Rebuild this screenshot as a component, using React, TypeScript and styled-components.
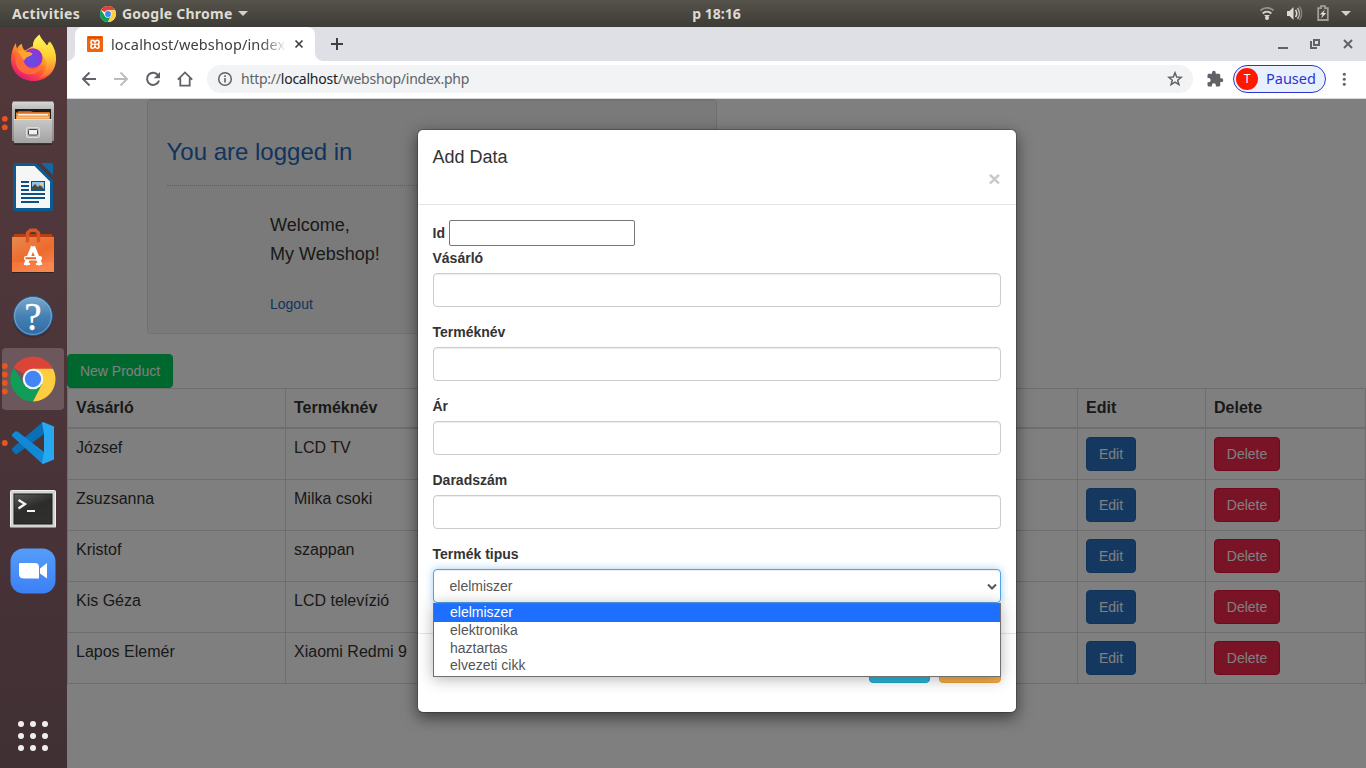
import React from "react";
import styled, { createGlobalStyle, css } from "styled-components";

const GlobalStyle = createGlobalStyle`
  * { box-sizing: border-box; }
  html, body { margin: 0; padding: 0; }
  body {
    width: 1366px;
    height: 768px;
    overflow: hidden;
    font-family: "Liberation Sans", Arial, sans-serif;
    font-size: 14px;
    line-height: 1.42857;
    color: #333;
  }
`;

const uiFont = css`
  font-family: "Noto Sans", "Open Sans", sans-serif;
`;

/* ---------- Desktop shell ---------- */

const Desktop = styled.div`
  width: 1366px;
  height: 768px;
  display: flex;
  flex-direction: column;
  overflow: hidden;
`;

const TopBar = styled.header`
  ${uiFont}
  height: 27px;
  flex: none;
  display: grid;
  grid-template-columns: 1fr auto 1fr;
  align-items: center;
  padding: 0 15px 0 12px;
  background: linear-gradient(#55534a, #3d3b36);
  color: #dfdbd2;
  font-size: 14px;
  font-weight: 700;
  line-height: 27px;
`;

const TopLeft = styled.div`
  display: flex;
  align-items: center;
  svg { margin-left: 20px; flex: none; }
`;

const TopText = styled.span<{ $space?: number; $w?: number }>`
  letter-spacing: ${(p) => p.$space ?? 0}px;
  white-space: nowrap;
  width: ${(p) => (p.$w ? `${p.$w}px` : "auto")};
`;

const AppName = styled(TopText)`
  margin-left: 6px;
`;

const Clock = styled(TopText)`
  padding-left: 70px;
`;

const Caret = styled.i<{ $gap?: number }>`
  margin-left: ${(p) => p.$gap ?? 0}px;
  border: 5px solid transparent;
  border-top-color: #d5d1c8;
  border-bottom: 0;
`;

const StatusArea = styled.div`
  display: flex;
  justify-content: flex-end;
  align-items: center;
`;

const Main = styled.div`
  flex: 1;
  display: flex;
  min-height: 0;
`;

const Dock = styled.nav`
  width: 67px;
  flex: none;
  display: flex;
  flex-direction: column;
  background: linear-gradient(#53383b 0%, #4d363a 40%, #463237 72%, #403033 100%);
`;

const DockItem = styled.div<{ $active?: boolean }>`
  height: 62px;
  margin: 1px 3px 1px 2px;
  border-radius: 4px;
  background: ${(p) => (p.$active ? "#6b575c" : "transparent")};
  svg {
    display: block;
    transform: translate(-2px, -1px);
    overflow: visible;
  }
`;

const AppsButton = styled.div`
  margin-top: auto;
  height: 64px;
  svg { display: block; }
`;

/* ---------- Browser window ---------- */

const Browser = styled.div`
  ${uiFont}
  flex: 1;
  min-width: 0;
  display: flex;
  flex-direction: column;
`;

const TabStrip = styled.div`
  height: 34px;
  flex: none;
  display: flex;
  align-items: flex-end;
  background: #dee0e6;
`;

const TabFlare = styled.span<{ $side: "left" | "right" }>`
  width: 8px;
  height: 8px;
  background: radial-gradient(
    circle at ${(p) => (p.$side === "left" ? "0 0" : "100% 0")},
    transparent 7.5px,
    #fff 8.2px
  );
`;

const Tab = styled.div`
  width: 240px;
  height: 34px;
  display: flex;
  align-items: center;
  padding: 0 11px 0 12px;
  border-radius: 8px 8px 0 0;
  background: #fff;
`;

const TabTitle = styled.span`
  flex: none;
  width: 175px;
  margin: 0 8px;
  overflow: hidden;
  white-space: nowrap;
  font-size: 14.5px;
  letter-spacing: 0.13px;
  line-height: 32px;
  color: #3c4043;
  mask-image: linear-gradient(to right, #000 150px, transparent 176px);
`;

const NewTab = styled.div`
  display: flex;
  align-items: center;
  height: 34px;
  margin-left: 7px;
`;

const WindowControls = styled.div`
  display: flex;
  height: 34px;
  margin-left: auto;
  margin-right: 12px;
  align-items: center;
`;

const Toolbar = styled.div`
  height: 38px;
  flex: none;
  display: flex;
  align-items: center;
  padding: 0 13px 2px 14px;
  background: #fff;
  border-bottom: 1px solid #d5d7dc;
`;

const NavIcons = styled.div`
  display: flex;
  gap: 16px;
  margin-right: 14px;
  svg { display: block; }
`;

const Omnibox = styled.div`
  width: 986px;
  height: 28px;
  display: flex;
  align-items: center;
  padding: 0 10px;
  border-radius: 14px;
  background: #f1f3f4;
`;

const Url = styled.span`
  flex: 1;
  margin-left: 8px;
  font-size: 14px;
  letter-spacing: -0.25px;
  line-height: 28px;
  color: #5f6368;
  b { font-weight: 400; color: #202124; }
`;

const Extensions = styled.div`
  display: flex;
  margin-left: 13px;
`;

const Profile = styled.div`
  display: flex;
  align-items: center;
  width: 93px;
  height: 28px;
  margin: 0 10px 0 9px;
  padding-left: 2px;
  border: 1px solid #2b36cc;
  border-radius: 14px;
  background: #e8f0fe;
  color: #2b36cc;
  font-size: 14.5px;
`;

const Avatar = styled.span`
  width: 22px;
  height: 22px;
  margin-right: 8px;
  border-radius: 50%;
  background: #ff1800;
  color: #fff;
  font-size: 12px;
  line-height: 22px;
  text-align: center;
`;

/* ---------- Web page ---------- */

const Viewport = styled.main`
  position: relative;
  flex: 1;
  overflow: hidden;
  background: #fff;
  font-family: "Liberation Sans", Arial, sans-serif;
`;

const Well = styled.section`
  width: 570px;
  height: 235px;
  margin: 0 0 20px 80px;
  padding: 36px 19px 0 18.5px;
  border: 1px solid #e3e3e3;
  border-radius: 4px;
  background: #f5f5f5;
  box-shadow: inset 0 1px 1px rgba(0, 0, 0, 0.05);
`;

const WellTitle = styled.h3`
  margin: 0;
  border-bottom: 1px dotted #c0c0c0;
  font-size: 24px;
  font-weight: 400;
  line-height: 32px;
  height: 50px;
  color: #2468b8;
`;

const Welcome = styled.div`
  margin: 25px 0 0 103.5px;
  font-size: 18px;
  line-height: 29px;
`;

const Logout = styled.a`
  display: block;
  margin: 25px 0 0 103.5px;
  line-height: 20px;
  color: #2468b8;
`;

const tones = {
  green: ["#00d05c", "#00c853"],
  blue: ["#2871c0", "#2466b0"],
  red: ["#f0294d", "#e0103c"],
  cyan: ["#29b6d8", "#18a8c8"],
  orange: ["#f5ae4a", "#f0a030"],
};

const Button = styled.button<{ $tone: keyof typeof tones; $w: number }>`
  display: block;
  width: ${(p) => p.$w}px;
  height: 34px;
  padding: 0;
  border: 1px solid ${(p) => tones[p.$tone][1]};
  border-radius: 4px;
  background: ${(p) => tones[p.$tone][0]};
  color: #fff;
  font: 14px/20px "Liberation Sans", Arial, sans-serif;
`;

const Row = styled.div<{ $head?: boolean }>`
  display: grid;
  grid-template-columns: 218px 792px 128px 161px;
  height: ${(p) => (p.$head ? 41 : 51)}px;
  border-top: ${(p) => (p.$head ? "1px solid #ddd" : "0")};
  border-bottom: ${(p) => (p.$head ? 2 : 1)}px solid #ddd;
  font-weight: ${(p) => (p.$head ? 700 : 400)};
  font-size: 16px;
  line-height: 22px;
`;

const Cell = styled.div`
  padding: 8px;
  border-left: 1px solid #ddd;
  &:last-child { border-right: 1px solid #ddd; }
`;

/* ---------- Modal ---------- */

const Backdrop = styled.div`
  position: absolute;
  inset: 0;
  display: flex;
  justify-content: center;
  align-items: flex-start;
  padding-top: 30px;
  background: rgba(0, 0, 0, 0.5);
`;

const Dialog = styled.div`
  width: 600px;
  height: 584px;
  border: 1px solid rgba(0, 0, 0, 0.2);
  border-radius: 6px;
  background: #fff;
  background-clip: padding-box;
  box-shadow: 0 5px 15px rgba(0, 0, 0, 0.5);
`;

const DialogHead = styled.div`
  height: 75px;
  padding: 14px 15px;
  border-bottom: 1px solid #e5e5e5;
`;

const DialogTitle = styled.h4`
  margin: 0;
  font-size: 18px;
  font-weight: 400;
  line-height: 26px;
`;

const Close = styled.div`
  color: #c8c8c8;
  font-size: 21px;
  font-weight: 700;
  line-height: 17px;
  text-align: right;
`;

const DialogBody = styled.div`
  height: 429px;
  padding: 15px 15px 0;
  border-bottom: 1px solid #e5e5e5;
`;

const IdLine = styled.div`
  display: flex;
  align-items: center;
  gap: 4px;
  height: 26px;
  margin-bottom: 2px;
`;

const Label = styled.label`
  display: block;
  font-size: 14px;
  font-weight: 700;
  line-height: 20px;
`;

const PlainInput = styled.input`
  width: 186px;
  height: 26px;
  border: 1px solid #767676;
  border-radius: 2px;
`;

const Field = styled.div`
  position: relative;
  margin-bottom: 15px;
  ${Label} { margin-bottom: 5px; }
`;

const control = css`
  display: block;
  width: 568px;
  height: 34px;
  border: 1px solid #ccc;
  border-radius: 4px;
  background: #fff;
  box-shadow: inset 0 1px 1px rgba(0, 0, 0, 0.075);
`;

const TextInput = styled.input`
  ${control}
`;

const SelectBox = styled.div`
  ${control}
  display: flex;
  align-items: center;
  justify-content: space-between;
  padding: 1px 3px 0 16px;
  border-color: #52a2ea;
  color: #555;
  box-shadow: inset 0 1px 1px rgba(0, 0, 0, 0.075), 0 0 8px rgba(102, 175, 233, 0.6);
`;

const OptionList = styled.ul`
  position: absolute;
  top: 59px;
  left: 0;
  width: 568px;
  height: 74px;
  margin: 0;
  padding: 0;
  list-style: none;
  border: 1px solid #6f6f6f;
  background: #fff;
  box-shadow: 0 2px 14px rgba(0, 0, 0, 0.3);
`;

const Option = styled.li<{ $selected?: boolean }>`
  height: ${(p) => (p.$selected ? 18 : 17.6)}px;
  padding-left: 16.5px;
  line-height: 17px;
  color: ${(p) => (p.$selected ? "#fff" : "#555")};
  background: ${(p) => (p.$selected ? "#1e6fff" : "transparent")};
`;

const DialogFoot = styled.div`
  display: flex;
  justify-content: flex-end;
  gap: 9px;
  padding: 15px;
`;

/* ---------- Icons ---------- */

const ChromeLogo = ({ size }: { size: number }) => (
  <svg width={size} height={size} viewBox="0 0 48 48">
    <circle cx="24" cy="24" r="24" fill="#fff" />
    <path d="M24 24 3.2 12A24 24 0 0 1 44.8 12L24 13Z" fill="#db4437" />
    <path d="M3.2 12A24 24 0 0 0 24 48L33.5 29.5 24 34 14.5 29.5Z" fill="#0f9d58" />
    <path d="M24 13H45.3A24 24 0 0 1 24 48L33.5 29.5Z" fill="#ffcd40" />
    <circle cx="24" cy="24" r="11" fill="#f1f1f1" />
    <circle cx="24" cy="24" r="8.8" fill="#4285f4" />
  </svg>
);

const DockSvg = ({ children }: { children: React.ReactNode }) => (
  <svg width="67" height="64" viewBox="0 0 67 64">{children}</svg>
);

const Dots = ({ ys }: { ys: number[] }) => (
  <>
    {ys.map((y) => (
      <circle key={y} cx="4.8" cy={y} r="2.9" fill="#e95420" />
    ))}
  </>
);

const Firefox = () => (
  <DockSvg>
    <defs>
      <linearGradient id="ffBody" x1="0.85" y1="0.1" x2="0.25" y2="0.95">
        <stop offset="0" stopColor="#fff44f" />
        <stop offset="0.35" stopColor="#ffa72b" />
        <stop offset="0.65" stopColor="#ff5634" />
        <stop offset="1" stopColor="#e5177b" />
      </linearGradient>
      <linearGradient id="ffFlame" x1="0.5" y1="0" x2="0.5" y2="1">
        <stop offset="0" stopColor="#fff75a" />
        <stop offset="0.5" stopColor="#ffd030" />
        <stop offset="1" stopColor="#ff6a3a" />
      </linearGradient>
      <radialGradient id="ffGlobe" cx="0.45" cy="0.6" r="0.6">
        <stop offset="0" stopColor="#5b51e8" />
        <stop offset="1" stopColor="#9a30d0" />
      </radialGradient>
    </defs>
    <path d="M16 16C16 18 16.4 20 17 21.5 18.5 19 20 17.6 22 17c0 3 1 5 3 6.5l8-4.5 6-2c6 0 10 3 10.5 0 .5-.6.6-1.6.5-2.5 4 5 6 11 6 17.5C56 44.500 46.500 54 33.500 54S11 44.500 11 32.500C11 26 13 20 16 16Z" fill="url(#ffBody)" />
    <path d="M39.500 7.500C41 12 44 14 47 18.500c.8-1 1.600-2.500 2-4C54 20 56 27 55.500 33.500 54 44 47 50 39 50.500 46 46 48 38 45 31.500 42 26 34 23 33 18.500 32.700 14 36 10 39.500 7.500Z" fill="url(#ffFlame)" />
    <path d="M17 25c4-2.500 8-1.500 9.500 0 2 .5 4.500.3 6 1.600-.5 2-2.500 3-6 4-2 2-3 4.500-.5 8 4 5 11 4.500 15 2-1 6-12 10-20 4-5-4-7.500-12-4-19.600Z" fill="#ff7139" opacity=".85" />
    <circle cx="32.800" cy="31" r="9.800" fill="url(#ffGlobe)" />
    <path d="M17 24c4-2 7-1 9.500.8 2 .4 4.500.5 6 1.800-.5 2-3 2.600-6 4-1 .8-2 2-2.500 3.500-2-4-4-7-7-10Z" fill="#ffa52e" />
  </DockSvg>
);

const Files = () => (
  <DockSvg>
    <defs>
      <linearGradient id="fiBack" x1="0" y1="0" x2="0" y2="1">
        <stop offset="0" stopColor="#d8d8d8" />
        <stop offset="0.25" stopColor="#b2b2b2" />
        <stop offset="1" stopColor="#8c8c8c" />
      </linearGradient>
      <linearGradient id="fiFront" x1="0" y1="0" x2="0" y2="1">
        <stop offset="0" stopColor="#c8c8c8" />
        <stop offset="1" stopColor="#a2a2a2" />
      </linearGradient>
    </defs>
    <Dots ys={[27.8, 36.3]} />
    <path d="M13 10.500H53L54 13V50H12V13Z" fill="url(#fiBack)" />
    <rect x="15" y="18" width="36" height="10" fill="#1f1d1c" />
    <path d="M18 20h13l2 1h16v3H18z" fill="#c45214" />
    <rect x="16" y="21.500" width="34" height="7" fill="#ec8a35" />
    <rect x="18" y="23" width="30" height="1.500" fill="#fff3e2" />
    <rect x="17" y="25.500" width="32" height="2" fill="#f6c27f" />
    <path d="M14 28H52V52.500H14Z" fill="url(#fiFront)" />
    <path d="M14 28.500H52" stroke="#dedede" />
    <rect x="26.500" y="36.500" width="13" height="10" rx="1.500" fill="#bcbcbc" stroke="#dcdcdc" />
    <rect x="28.500" y="38.500" width="9" height="5.500" rx="1" fill="#f1f1f1" stroke="#444" />
    <path d="M14 53H52" stroke="#2b2022" strokeWidth="1.500" />
  </DockSvg>
);

const Writer = () => (
  <DockSvg>
    <path d="M15 8H36L53 25V54Q53 56 51 56H15Q13 56 13 54V10Q13 8 15 8Z" fill="#0b5a92" />
    <path d="M41 8H52Q53 8 53 9V20Z" fill="#0f69a5" />
    <path d="M16 11H34.500L50 26.500V53H16Z" fill="#f6f6f6" />
    <g fill="#0c5183">
      <rect x="21" y="26" width="8" height="2" />
      <rect x="21" y="30" width="8" height="2" />
      <rect x="21" y="34" width="8" height="2" />
      <rect x="21" y="38" width="24" height="2" />
      <rect x="21" y="42" width="24" height="2" />
      <rect x="21" y="46" width="18" height="2" />
      <rect x="31" y="26" width="14" height="10" />
    </g>
    <rect x="32" y="27" width="12" height="8" fill="#8cc4ea" />
    <path d="M32 35v-3l3-3 3 3 2-2 4 4v1Z" fill="#4a4a42" />
    <circle cx="41.500" cy="29" r="1.500" fill="#f4d35e" />
  </DockSvg>
);

const Software = () => (
  <DockSvg>
    <defs>
      <linearGradient id="swBag" x1="0" y1="0" x2="0.6" y2="1">
        <stop offset="0" stopColor="#e58a52" />
        <stop offset="0.6" stopColor="#ef6a2c" />
        <stop offset="1" stopColor="#f4814a" />
      </linearGradient>
    </defs>
    <path d="M14.500 15H51.500L54 19H12Z" fill="#b93f12" />
    <rect x="12" y="18" width="42" height="35" fill="url(#swBag)" />
    <path d="M12 43H54V53H12Z" fill="#ff9058" opacity=".35" />
    <path d="M27.500 23.500V14L30.500 11.300H35.500L38.500 14V23.500" fill="none" stroke="#dc5420" strokeWidth="3.400" />
    <path d="M33 27.500 25.500 46M33 27.500 40.500 46" stroke="#fff" strokeWidth="4" />
    <path d="M24 45H30M36 45H42" stroke="#fff" strokeWidth="2" />
    <rect x="24" y="37" width="18" height="4.500" rx="2" fill="#fff" />
    <rect x="25.500" y="38.300" width="10.500" height="1.900" fill="#e8622a" />
    <path d="M12 53.500H54" stroke="#2f2225" />
  </DockSvg>
);

const Help = () => (
  <DockSvg>
    <defs>
      <linearGradient id="hpDisc" x1="0" y1="0" x2="0" y2="1">
        <stop offset="0" stopColor="#7ba9cf" />
        <stop offset="0.5" stopColor="#4681b4" />
        <stop offset="1" stopColor="#2f6ba3" />
      </linearGradient>
    </defs>
    <ellipse cx="33" cy="36" rx="20" ry="19" fill="#33262a" opacity=".5" />
    <circle cx="33" cy="33" r="19.500" fill="url(#hpDisc)" stroke="#275b8c" />
    <circle cx="33" cy="33" r="18.400" fill="none" stroke="#8db7d9" strokeWidth=".7" />
    <text x="33" y="46.500" textAnchor="middle" fontFamily="Liberation Serif, serif" fontSize="39" fill="#fff" stroke="#fff" strokeWidth=".3">?</text>
  </DockSvg>
);

const ChromeDock = () => (
  <DockSvg>
    <Dots ys={[19, 27.5, 36, 44.5]} />
    <g transform="translate(10.500 9.500)">
      <g transform="scale(.9375)">
        <path d="M24 24 3.200 12A24 24 0 0 1 44.800 12L24 24Z" fill="#db4437" />
        <path d="M3.200 12A24 24 0 0 0 24 48L33.500 29.500 24 34 14.500 29.500Z" fill="#0f9d58" />
        <path d="M24 13H45.300A24 24 0 0 1 24 48L33.500 29.500Z" fill="#ffcd40" />
        <circle cx="24" cy="24" r="11" fill="#f4f4f4" />
        <circle cx="24" cy="24" r="8.700" fill="#4285f4" />
      </g>
    </g>
  </DockSvg>
);

const Code = () => (
  <DockSvg>
    <Dots ys={[32]} />
    <path d="M12 37.500V39L15.500 43.300 17 43 44 23V11L42 11.500Z" fill="#0a6fb6" />
    <path d="M12 25V23.500L15.500 20.300 17.500 20.500 44 41V53L42 52.500Z" fill="#1289d4" />
    <path d="M43 11 54 15.500V48.500L43 53 42 52 44 41V23L42 12Z" fill="#29a8f2" />
  </DockSvg>
);

const TerminalIcon = () => (
  <DockSvg>
    <defs>
      <linearGradient id="tmScr" x1="0" y1="0" x2="0.5" y2="1">
        <stop offset="0" stopColor="#5a5a58" />
        <stop offset="0.55" stopColor="#2c2c2b" />
        <stop offset="1" stopColor="#2f2f2e" />
      </linearGradient>
    </defs>
    <rect x="10.500" y="15.500" width="45" height="37" rx="1" fill="#d4d4d0" stroke="#f0f0ee" />
    <path d="M10.500 52.500H55.500" stroke="#8a8a86" />
    <rect x="14" y="19" width="38" height="30" fill="url(#tmScr)" stroke="#1c1c1c" />
    <path d="M18.500 25 25 29 18.500 33.500" fill="none" stroke="#f4f4f4" strokeWidth="2.300" />
    <path d="M27 36H35" stroke="#f4f4f4" strokeWidth="2" />
  </DockSvg>
);

const ZoomIcon = () => (
  <DockSvg>
    <defs>
      <linearGradient id="zmBg" x1="0" y1="0" x2="0" y2="1">
        <stop offset="0" stopColor="#559df9" />
        <stop offset="1" stopColor="#3c80f5" />
      </linearGradient>
    </defs>
    <rect x="10.500" y="9.500" width="45" height="45" rx="13" fill="url(#zmBg)" />
    <path d="M20 24H35Q39 24 39 28V39.500H24Q19 39.500 19 35V25Q19 24 20 24Z" fill="#fff" />
    <path d="M40 29.500 47 24V39.500L40 34.500Z" fill="#fff" />
  </DockSvg>
);

const stroke = { fill: "none", stroke: "#5f6368", strokeWidth: 2 } as const;

const products = [
  ["József", "LCD TV"],
  ["Zsuzsanna", "Milka csoki"],
  ["Kristof", "szappan"],
  ["Kis Géza", "LCD televízió"],
  ["Lapos Elemér", "Xiaomi Redmi 9"],
];

const fields = ["Vásárló", "Terméknév", "Ár", "Daradszám"];
const options = ["elelmiszer", "elektronika", "haztartas", "elvezeti cikk"];

const SystemBar = () => (
  <TopBar>
    <TopLeft>
      <TopText $w={68} $space={0.3}>Activities</TopText>
      <ChromeLogo size={16} />
      <AppName $w={111} $space={0.23}>Google Chrome</AppName>
      <Caret $gap={5} />
    </TopLeft>
    <Clock>p 18:16</Clock>
    <StatusArea>
      <svg width="92" height="27" viewBox="1259 0 92 27">
        <g fill="none" strokeWidth="1.800">
          <path d="M1260.500 10.500a9.500 9.500 0 0 1 13 0" stroke="#96938b" />
          <path d="M1262.700 13.500a6 6 0 0 1 8.600 0" stroke="#d8d4cb" />
        </g>
        <path d="M1264.500 15h5v1l-2.500 1-2.500-1z" fill="#d8d4cb" />
        <circle cx="1267" cy="18" r="2" fill="#dedad1" />
        <path d="M1287 11h2.500l4-4v13l-4-4H1287z" fill="#dedad1" />
        <path d="M1295.500 10q2.500 3.500 0 7" fill="none" stroke="#dedad1" strokeWidth="1.600" />
        <path d="M1297.500 8q4 5.500 0 11" fill="none" stroke="#c0bcb3" strokeWidth="1.400" />
        <path d="M1299.500 6.500q4.500 7 0 13.500" fill="none" stroke="#8b8880" strokeWidth="1.300" />
        <path d="M1318.200 8.200H1321V6.200H1325V8.200H1327.800V20H1318.200Z" fill="none" stroke="#a19e96" strokeWidth="1.800" />
        <path d="M1325 9.500 1319.800 14.500H1322.500L1321 18.500 1326.300 13H1323.500Z" fill="#e2ded5" />
        <path d="M1341 11H1351L1346 16Z" fill="#d5d1c8" />
      </svg>
    </StatusArea>
  </TopBar>
);

const BrowserChrome = () => (
  <>
    <TabStrip>
      <TabFlare $side="left" />
      <Tab>
        <svg width="16" height="16" viewBox="0 0 16 16">
          <rect width="16" height="16" rx="1" fill="#f0640f" />
          <path d="M1 1.500H15" stroke="#b94a08" strokeWidth="1" />
          <path
            d="M8 6.500C7.500 4.500 6.500 4.200 5.500 4.300 3.500 4.500 3.500 7.400 5 8.300 3.500 9.200 3.500 12.200 5.500 12.300 6.500 12.400 7.500 12 8 10.100 8.500 12 9.500 12.400 10.500 12.300 12.500 12.200 12.500 9.200 11 8.300 12.500 7.400 12.500 4.500 10.500 4.300 9.500 4.200 8.500 4.500 8 6.500ZM6.500 8.300H9.500"
            fill="none"
            stroke="#fff"
            strokeWidth="1.600"
          />
        </svg>
        <TabTitle>localhost/webshop/index.php</TabTitle>
        <svg width="10" height="10" viewBox="0 0 10 10">
          <path d="M1.500 1.500 8.500 8.500M8.500 1.500 1.500 8.500" {...stroke} stroke="#3c4043" strokeWidth="1.700" />
        </svg>
      </Tab>
      <TabFlare $side="right" />
      <NewTab>
        <svg width="14" height="14" viewBox="0 0 14 14">
          <path d="M7 1V13M1 7H13" {...stroke} stroke="#3c4043" />
        </svg>
      </NewTab>
      <WindowControls>
        <svg width="78" height="34" viewBox="1276 27 78 34">
          <path d="M1278 48H1288" {...stroke} />
          <rect x="1314" y="40" width="5" height="5" {...stroke} />
          <path d="M1311 41V48H1317" {...stroke} />
          <path d="M1344 40 1352 48M1352 40 1344 48" {...stroke} />
        </svg>
      </WindowControls>
    </TabStrip>
    <Toolbar>
      <NavIcons>
        <svg width="16" height="16" viewBox="0 0 16 16">
          <path d="M15 8H2M8.500 1.500 2 8 8.500 14.500" {...stroke} strokeWidth="1.900" />
        </svg>
        <svg width="16" height="16" viewBox="0 0 16 16">
          <path d="M1 8H14M7.500 1.500 14 8 7.500 14.500" {...stroke} stroke="#babcbe" strokeWidth="1.900" />
        </svg>
        <svg width="16" height="16" viewBox="0 0 16 16">
          <path d="M13.300 4.500A6.100 6.100 0 1 0 14 9.500" {...stroke} />
          <path d="M15 1V7.200H8.800Z" fill="#5f6368" />
        </svg>
        <svg width="16" height="16" viewBox="0 0 16 16">
          <path d="M.8 8.600 8 1.400 15.200 8.600M3.300 7V14.700H12.700V7" {...stroke} strokeWidth="1.800" />
        </svg>
      </NavIcons>
      <Omnibox>
        <svg width="16" height="16" viewBox="0 0 16 16">
          <circle cx="8" cy="8" r="6.300" {...stroke} strokeWidth="1.500" />
          <path d="M8 7V11.500M8 4.300V5.900" {...stroke} strokeWidth="1.600" />
        </svg>
        <Url>http://<b>localhost</b>/webshop/index.php</Url>
        <svg width="16" height="16" viewBox="0 0 16 16">
          <path d="M8 1.800 9.700 6 14.200 6.300 10.700 9.200 11.900 13.600 8 11.200 4.100 13.600 5.300 9.200 1.800 6.300 6.300 6Z" {...stroke} strokeWidth="1.500" />
        </svg>
      </Omnibox>
      <Extensions>
        <svg width="18" height="18" viewBox="0 0 24 24">
          <path fill="#5f6368" d="M20.500 11H19V7c0-1.100-.9-2-2-2h-4V3.500a2.500 2.500 0 0 0-5 0V5H4c-1.100 0-2 .9-2 2v3.800h1.500a2.700 2.700 0 0 1 0 5.400H2V20c0 1.100.9 2 2 2h3.800v-1.500a2.700 2.700 0 0 1 5.400 0V22H17c1.100 0 2-.9 2-2v-4h1.500a2.500 2.500 0 0 0 0-5z" />
        </svg>
      </Extensions>
      <Profile>
        <Avatar>T</Avatar>Paused
      </Profile>
      <svg width="16" height="16" viewBox="0 0 16 16" fill="#5f6368">
        <circle cx="8.300" cy="3.200" r="1.500" />
        <circle cx="8.300" cy="8.200" r="1.500" />
        <circle cx="8.300" cy="13.200" r="1.500" />
      </svg>
    </Toolbar>
  </>
);

const AddDataDialog = () => (
  <Backdrop>
    <Dialog>
      <DialogHead>
        <DialogTitle>Add Data</DialogTitle>
        <Close>×</Close>
      </DialogHead>
      <DialogBody>
        <IdLine>
          <Label>Id</Label>
          <PlainInput />
        </IdLine>
        {fields.map((name) => (
          <Field key={name}>
            <Label>{name}</Label>
            <TextInput />
          </Field>
        ))}
        <Field>
          <Label>Termék tipus</Label>
          <SelectBox>
            {options[0]}
            <svg width="10" height="8" viewBox="0 0 10 8">
              <path d="M1 1.500 5 5.500 9 1.500" fill="none" stroke="#555" strokeWidth="2" />
            </svg>
          </SelectBox>
          <OptionList>
            {options.map((o, i) => (
              <Option key={o} $selected={i === 0}>{o}</Option>
            ))}
          </OptionList>
        </Field>
      </DialogBody>
      <DialogFoot>
        <Button $tone="cyan" $w={61} />
        <Button $tone="orange" $w={62} />
      </DialogFoot>
    </Dialog>
  </Backdrop>
);

export default function App() {
  return (
    <Desktop>
      <GlobalStyle />
      <SystemBar />
      <Main>
        <Dock>
          <DockItem><Firefox /></DockItem>
          <DockItem><Files /></DockItem>
          <DockItem><Writer /></DockItem>
          <DockItem><Software /></DockItem>
          <DockItem><Help /></DockItem>
          <DockItem $active><ChromeDock /></DockItem>
          <DockItem><Code /></DockItem>
          <DockItem><TerminalIcon /></DockItem>
          <DockItem><ZoomIcon /></DockItem>
          <AppsButton>
            <DockSvg>
              {[20, 32, 44].map((y) =>
                [21, 33, 45].map((x) => <circle key={`${x}-${y}`} cx={x} cy={y} r="3" fill="#f0efee" />)
              )}
            </DockSvg>
          </AppsButton>
        </Dock>
        <Browser>
          <BrowserChrome />
          <Viewport>
            <Well>
              <WellTitle>You are logged in</WellTitle>
              <Welcome>
                Welcome,
                <br />
                My Webshop!
              </Welcome>
              <Logout>Logout</Logout>
            </Well>
            <Button $tone="green" $w={106}>New Product</Button>
            <Row $head>
              <Cell>Vásárló</Cell>
              <Cell>Terméknév</Cell>
              <Cell>Edit</Cell>
              <Cell>Delete</Cell>
            </Row>
            {products.map(([buyer, product]) => (
              <Row key={buyer}>
                <Cell>{buyer}</Cell>
                <Cell>{product}</Cell>
                <Cell><Button $tone="blue" $w={50}>Edit</Button></Cell>
                <Cell><Button $tone="red" $w={66}>Delete</Button></Cell>
              </Row>
            ))}
            <AddDataDialog />
          </Viewport>
        </Browser>
      </Main>
    </Desktop>
  );
}
